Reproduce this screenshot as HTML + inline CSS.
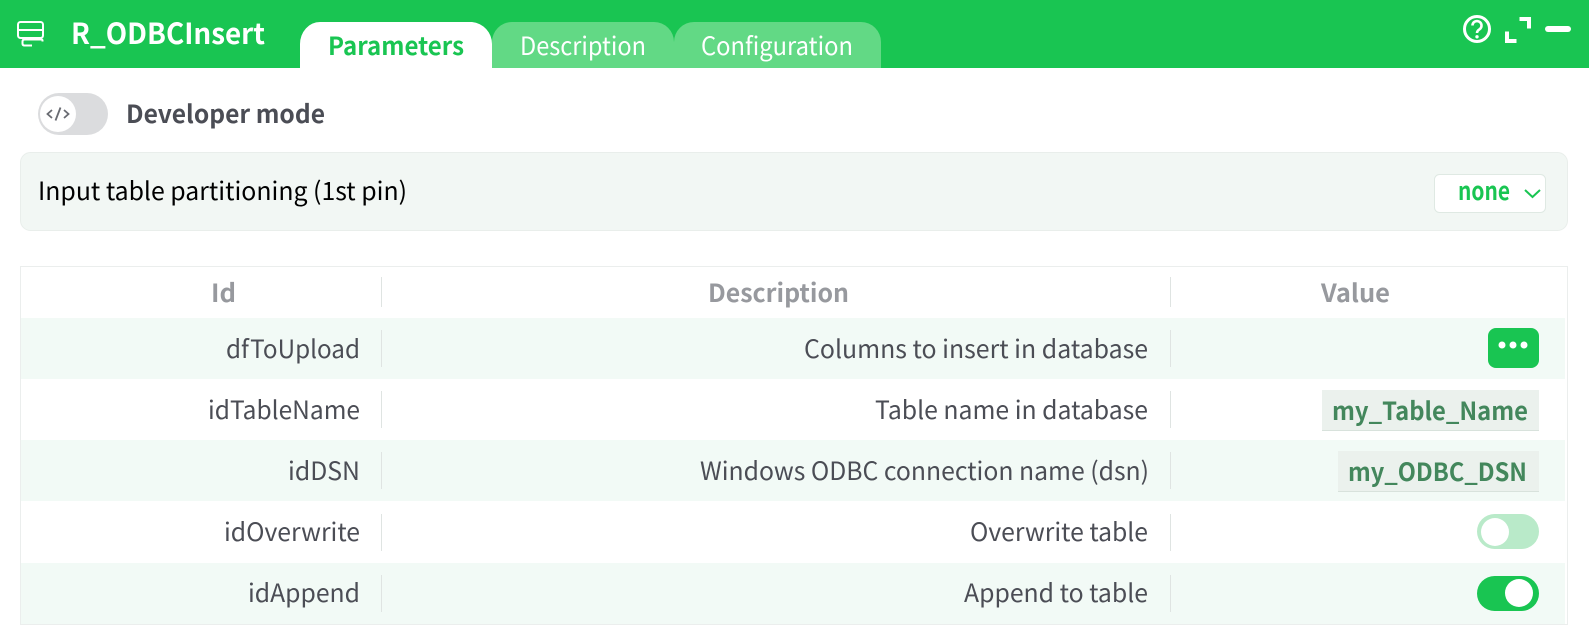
<!DOCTYPE html>
<html><head><meta charset="utf-8"><style>
html,body{margin:0;padding:0;background:#fff;width:1589px;height:644px;overflow:hidden}
svg{display:block}
text{font-family:"Noto Sans CJK JP","Liberation Sans",sans-serif;font-size:25px}
.b{font-weight:700}
.r{fill:#4b4d55}
.h{fill:#97999e;font-weight:700}
</style></head><body>
<svg width="1589" height="644" viewBox="0 0 1589 644" xmlns="http://www.w3.org/2000/svg">
<rect width="1589" height="68" fill="#19c552"/>
<path d="M492 68V44a22 22 0 0 0-20-22H320a20 22 0 0 0-20 22V68z" fill="#fff"/>
<path d="M492 68V42a20 20 0 0 1 20-20H654a20 20 0 0 1 20 20V68z" fill="#62d985"/>
<path d="M674 68V42a20 20 0 0 1 20-20H861a20 20 0 0 1 20 20V68z" fill="#62d985"/>
<g fill="none" stroke="#fff" stroke-width="2">
<rect x="18" y="22" width="25" height="16" rx="2.500"/>
<path d="M18 30H43"/>
<path d="M42.500 41.500V40.500Q42.500 39.500 41 39.500H24.500Q22.500 39.500 22.500 41.500V43.500Q22.500 45.500 24.500 45.500H32"/>
</g>
<text x="71" y="44" class="b" fill="#fff" textLength="194" lengthAdjust="spacingAndGlyphs" style="font-size:29px">R_ODBCInsert</text>
<text x="328" y="55" class="b" fill="#19c552" textLength="136" lengthAdjust="spacingAndGlyphs">Parameters</text>
<text x="520" y="55" fill="#fff" textLength="126" lengthAdjust="spacingAndGlyphs">Description</text>
<text x="701" y="55" fill="#fff" textLength="152" lengthAdjust="spacingAndGlyphs">Configuration</text>
<g fill="none" stroke="#fff" stroke-width="3">
<circle cx="1477" cy="29" r="12.500"/>
<path d="M1472.500 25.500a4.500 4.500 0 1 1 7 3.800c-1.500 1-2.500 1.800-2.500 3.700" stroke-width="2.600"/>
</g>
<circle cx="1477" cy="36.800" r="1.700" fill="#fff"/>
<path d="M1519.500 19H1529V28.500M1507 31.500V41H1516.500" fill="none" stroke="#fff" stroke-width="4"/>
<rect x="1545" y="26" width="26" height="6" rx="3" fill="#fff"/>
<rect x="38" y="93" width="70" height="42" rx="21" fill="#dbdcde"/>
<circle cx="58" cy="114" r="18" fill="#fff"/>
<path d="M52 110L47.500 114L52 118M64 110L68.500 114L64 118M60.500 107.500L55.500 120.500" fill="none" stroke="#696b72" stroke-width="1.800"/>
<text x="126" y="123" class="b r" textLength="199" lengthAdjust="spacingAndGlyphs">Developer mode</text>
<rect x="20.500" y="152.500" width="1547" height="78" rx="10" fill="#f2f7f4" stroke="#e9eeeb"/>
<text x="38" y="200" fill="#000" textLength="369" lengthAdjust="spacingAndGlyphs">Input table partitioning (1st pin)</text>
<rect x="1434.500" y="174.500" width="111" height="38" rx="5" fill="#fff" stroke="#dfe9e3"/>
<text x="1458" y="200" class="b" fill="#19c552" textLength="52" lengthAdjust="spacingAndGlyphs">none</text>
<path d="M1525 190L1532.500 197L1540 190" fill="none" stroke="#19c552" stroke-width="2"/>
<rect x="20.500" y="266.500" width="1547" height="358" fill="#fff" stroke="#ebeeed"/>
<rect x="21" y="318" width="1544" height="61" fill="#f2faf6"/>
<rect x="21" y="440" width="1544" height="61" fill="#f2faf6"/>
<rect x="21" y="563" width="1544" height="61" fill="#f2faf6"/>
<g fill="#dfe4e2">
<rect x="381" y="277" width="1" height="30"/><rect x="1170" y="277" width="1" height="30"/>
<rect x="381" y="330" width="1" height="37"/><rect x="1170" y="330" width="1" height="37"/>
<rect x="381" y="391" width="1" height="37"/><rect x="1170" y="391" width="1" height="37"/>
<rect x="381" y="452" width="1" height="37"/><rect x="1170" y="452" width="1" height="37"/>
<rect x="381" y="514" width="1" height="37"/><rect x="1170" y="514" width="1" height="37"/>
<rect x="381" y="575" width="1" height="37"/><rect x="1170" y="575" width="1" height="37"/>
</g>
<text x="211" y="302" class="h" textLength="25" lengthAdjust="spacingAndGlyphs">Id</text>
<text x="708" y="302" class="h" textLength="141" lengthAdjust="spacingAndGlyphs">Description</text>
<text x="1321" y="302" class="h" textLength="69" lengthAdjust="spacingAndGlyphs">Value</text>
<text x="226" y="358" class="r" textLength="134" lengthAdjust="spacingAndGlyphs">dfToUpload</text>
<text x="804" y="358" class="r" textLength="344" lengthAdjust="spacingAndGlyphs">Columns to insert in database</text>
<text x="208" y="419" class="r" textLength="152" lengthAdjust="spacingAndGlyphs">idTableName</text>
<text x="875" y="419" class="r" textLength="273" lengthAdjust="spacingAndGlyphs">Table name in database</text>
<text x="288" y="480" class="r" textLength="72" lengthAdjust="spacingAndGlyphs">idDSN</text>
<text x="700" y="480" class="r" textLength="449" lengthAdjust="spacingAndGlyphs">Windows ODBC connection name (dsn)</text>
<text x="224" y="541" class="r" textLength="136" lengthAdjust="spacingAndGlyphs">idOverwrite</text>
<text x="970" y="541" class="r" textLength="178" lengthAdjust="spacingAndGlyphs">Overwrite table</text>
<text x="248" y="602" class="r" textLength="112" lengthAdjust="spacingAndGlyphs">idAppend</text>
<text x="964" y="602" class="r" textLength="184" lengthAdjust="spacingAndGlyphs">Append to table</text>
<rect x="1488" y="328" width="51" height="40" rx="8" fill="#19c552"/>
<circle cx="1502" cy="345" r="3.500" fill="#fff"/><circle cx="1513" cy="345" r="3.500" fill="#fff"/><circle cx="1524" cy="345" r="3.500" fill="#fff"/>
<rect x="1322" y="390" width="217" height="41" fill="#ebf1ed"/><rect x="1322" y="430" width="217" height="1" fill="#d8e2dc"/>
<text x="1332" y="420" class="b" fill="#43875c" textLength="196" lengthAdjust="spacingAndGlyphs">my_Table_Name</text>
<rect x="1338" y="451" width="201" height="41" fill="#ebf1ed"/><rect x="1338" y="491" width="201" height="1" fill="#d8e2dc"/>
<text x="1348" y="481" class="b" fill="#43875c" textLength="179" lengthAdjust="spacingAndGlyphs">my_ODBC_DSN</text>
<rect x="1477" y="514" width="62" height="35" rx="17.500" fill="#b9eac9"/>
<circle cx="1495" cy="532" r="14" fill="#fff"/>
<rect x="1477" y="576" width="62" height="35" rx="17.500" fill="#19c552"/>
<circle cx="1519" cy="593" r="14" fill="#fff"/>
</svg>
</body></html>
